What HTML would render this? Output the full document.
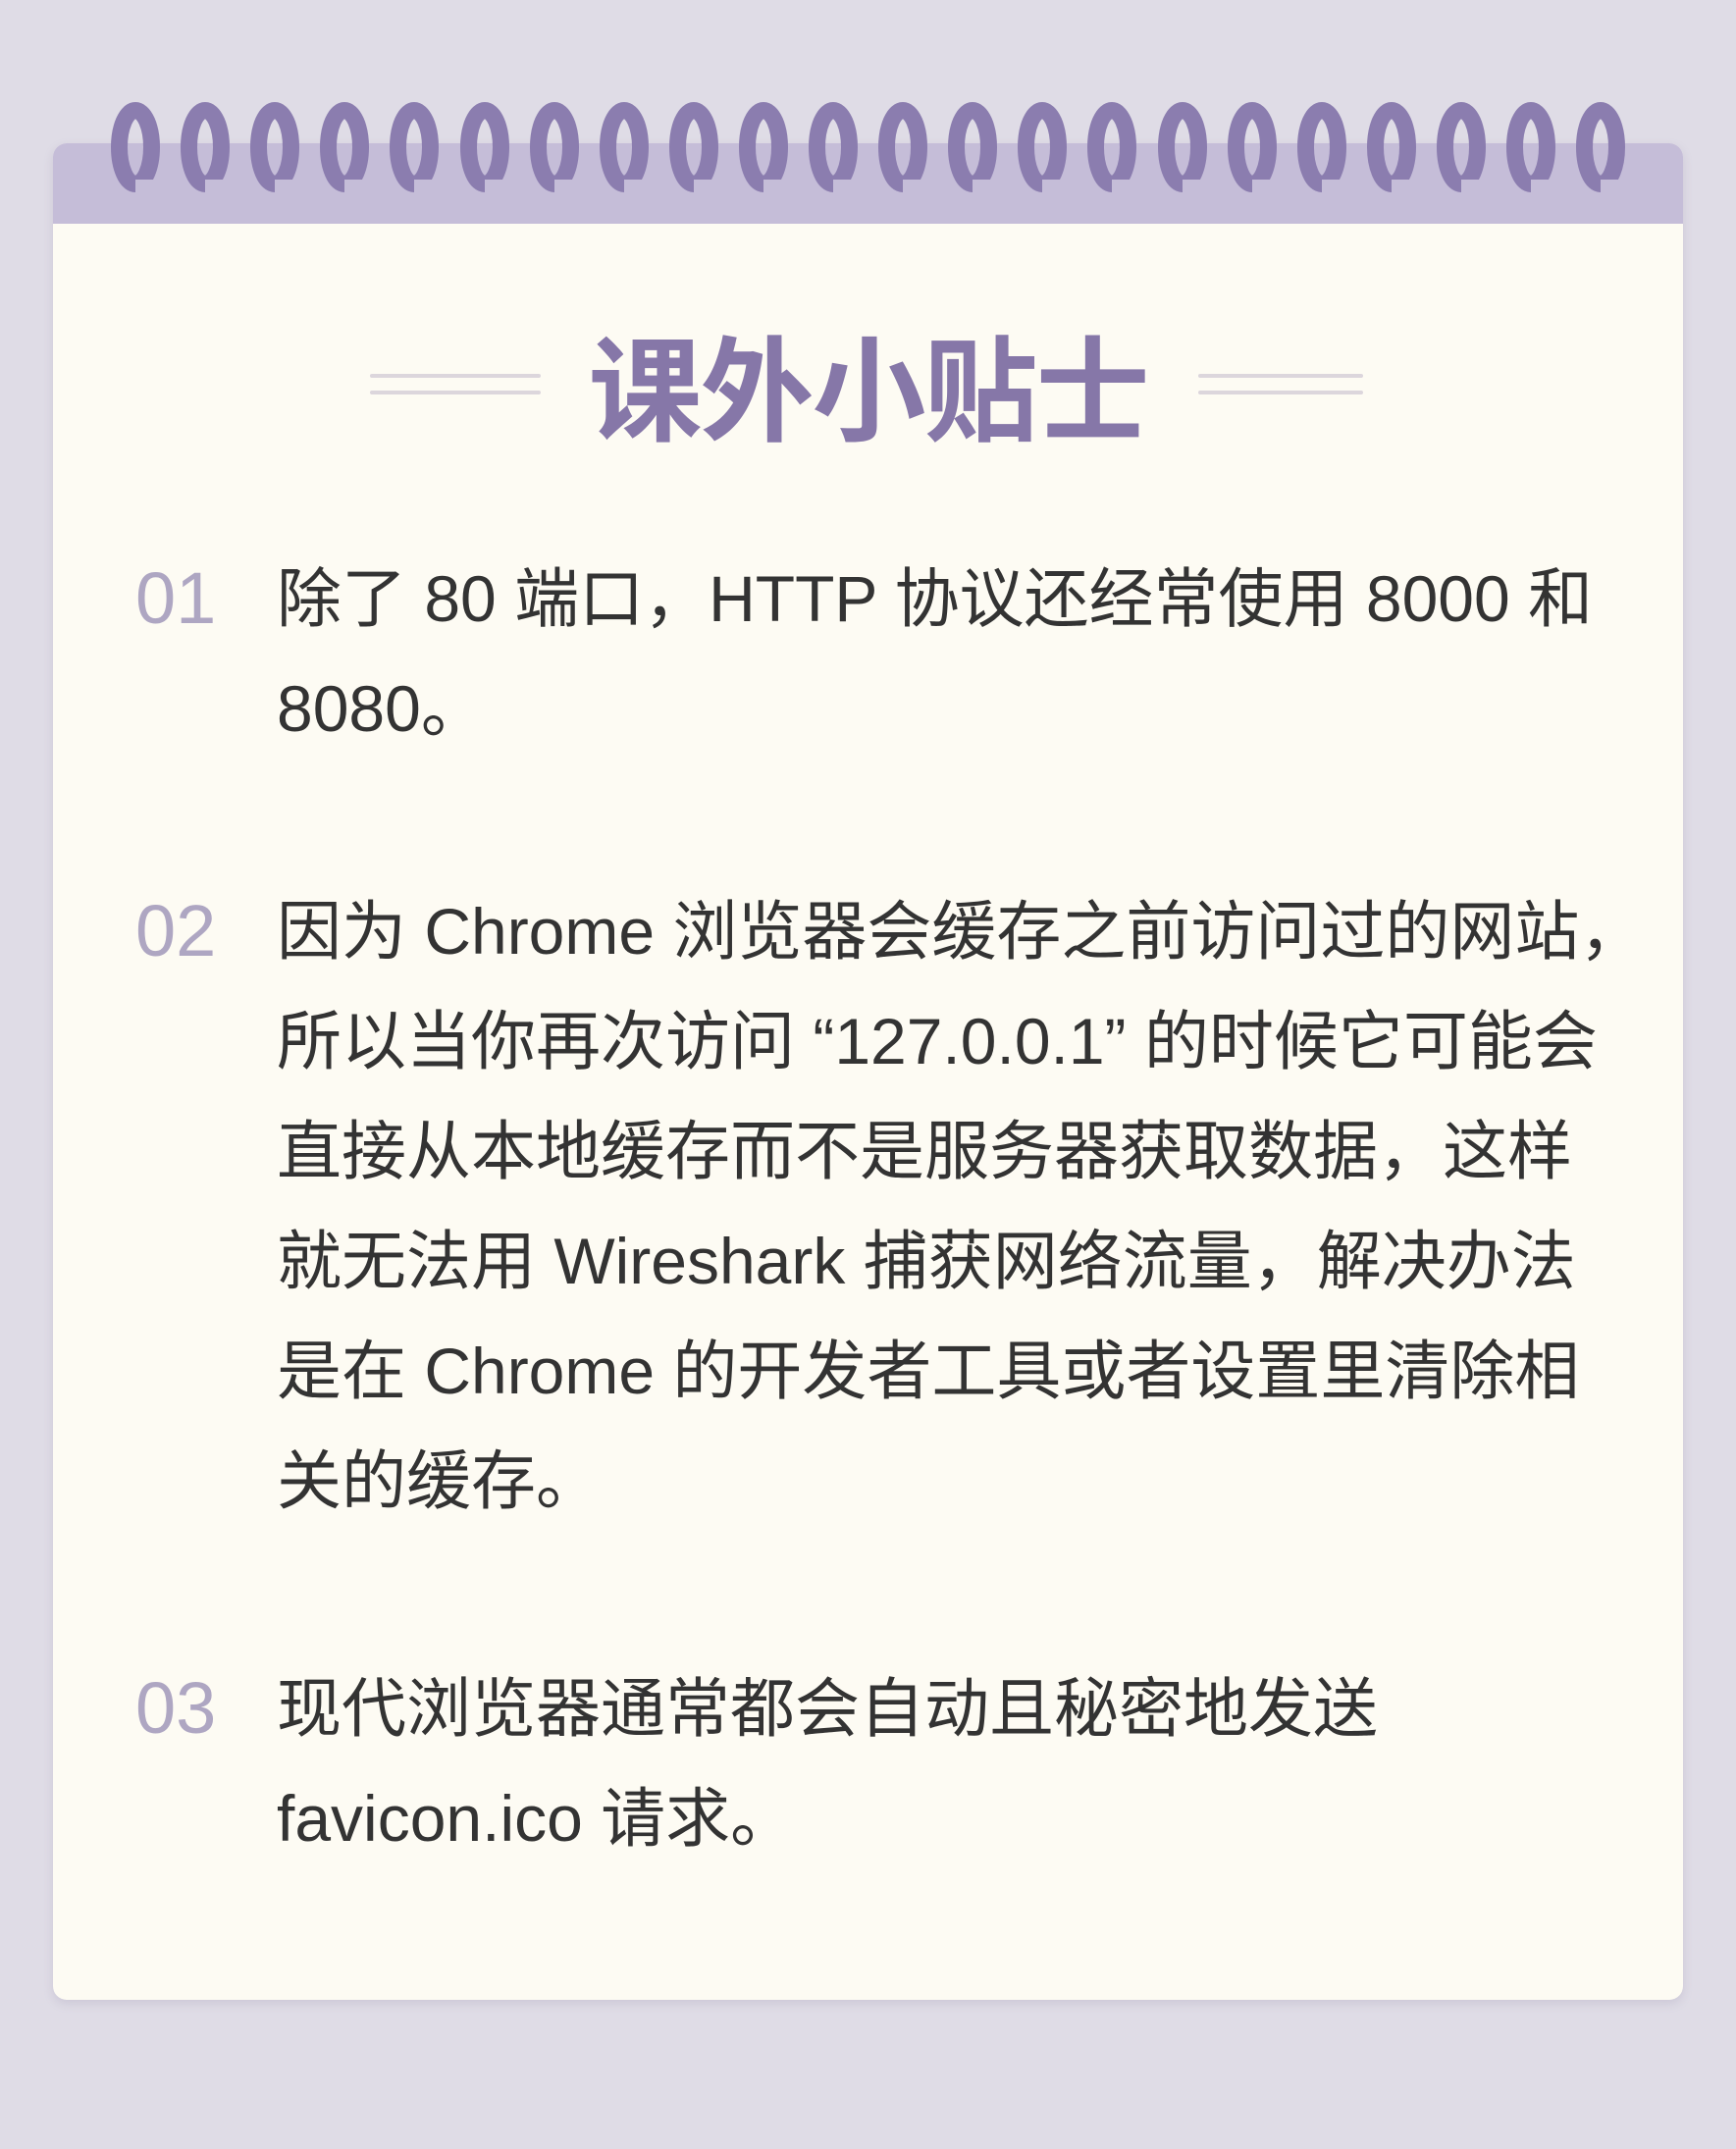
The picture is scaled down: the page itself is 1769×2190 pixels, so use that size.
<!DOCTYPE html>
<html><head><meta charset="utf-8"><style>
html,body{margin:0;padding:0}
body{width:1769px;height:2190px;background:#dfdce6;position:relative;overflow:hidden;font-family:"Liberation Sans","Noto Sans CJK SC",sans-serif}
.card{position:absolute;left:54px;top:146px;width:1661px;height:1892px;background:#fdfbf3;border-radius:14px;box-shadow:0 4px 10px rgba(120,110,150,.18);overflow:hidden}
.hdr{position:absolute;left:0;top:0;width:100%;height:82px;background:#c5bdd8}
.title{position:absolute;left:0;width:1769px;top:320px;text-align:center;font-size:116px;line-height:140px;font-weight:bold;color:#8677a8;font-family:"Noto Sans CJK SC",sans-serif;letter-spacing:-2px}
.ln{position:absolute;height:4px;background:#dcd6dc;border-radius:2px}
.num{position:absolute;left:138px;font-size:74px;color:#aea6c2;line-height:112px}
.txt{position:absolute;left:282px;font-size:66px;color:#333;line-height:112px;white-space:nowrap}
</style></head><body>
<div class="card"><div class="hdr"></div></div>
<svg style="position:absolute;left:0;top:0" width="1769" height="260">
<defs><g id="r"><ellipse cx="25" cy="46" rx="16.5" ry="37.5" fill="none" stroke="#8b7daf" stroke-width="17"/><rect x="25" y="79" width="19" height="14" fill="#c5bdd8"/></g></defs>
<use href="#r" x="113" y="104"/><use href="#r" x="184" y="104"/><use href="#r" x="255" y="104"/><use href="#r" x="326" y="104"/><use href="#r" x="397" y="104"/><use href="#r" x="469" y="104"/><use href="#r" x="540" y="104"/><use href="#r" x="611" y="104"/><use href="#r" x="682" y="104"/><use href="#r" x="753" y="104"/><use href="#r" x="824" y="104"/><use href="#r" x="895" y="104"/><use href="#r" x="966" y="104"/><use href="#r" x="1037" y="104"/><use href="#r" x="1108" y="104"/><use href="#r" x="1180" y="104"/><use href="#r" x="1251" y="104"/><use href="#r" x="1322" y="104"/><use href="#r" x="1393" y="104"/><use href="#r" x="1464" y="104"/><use href="#r" x="1535" y="104"/><use href="#r" x="1606" y="104"/>
</svg>
<div class="ln" style="left:377px;width:174px;top:381px"></div>
<div class="ln" style="left:377px;width:174px;top:398px"></div>
<div class="ln" style="left:1221px;width:168px;top:381px"></div>
<div class="ln" style="left:1221px;width:168px;top:398px"></div>
<div class="title">课外小贴士</div>

<div class="num" style="top:554px">01</div>
<div class="txt" style="top:554px">除了 80 端口，HTTP 协议还经常使用 8000 和<br>8080。</div>

<div class="num" style="top:893px">02</div>
<div class="txt" style="top:893px">因为 Chrome 浏览器会缓存之前访问过的网站，<br>所以当你再次访问 “127.0.0.1” 的时候它可能会<br>直接从本地缓存而不是服务器获取数据，这样<br>就无法用 Wireshark 捕获网络流量，解决办法<br>是在 Chrome 的开发者工具或者设置里清除相<br>关的缓存。</div>

<div class="num" style="top:1685px">03</div>
<div class="txt" style="top:1685px">现代浏览器通常都会自动且秘密地发送<br>favicon.ico 请求。</div>
</body></html>
